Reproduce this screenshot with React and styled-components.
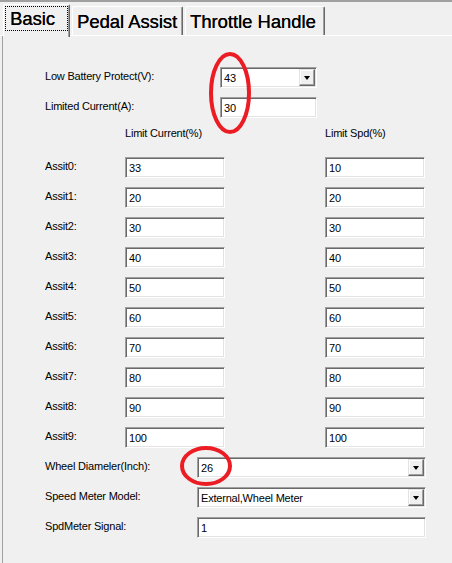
import React from 'react'
import styled, { createGlobalStyle } from 'styled-components'

const GlobalStyle = createGlobalStyle`
  html, body {
    margin: 0;
    padding: 0;
    background: #f0f0f0;
  }
  body {
    font-family: "Liberation Sans", Arial, sans-serif;
  }
`

const Window = styled.div`
  position: relative;
  width: 452px;
  height: 563px;
  overflow: hidden;
  box-sizing: border-box;
  border-top: 2px solid #a0a0a0;
  background: #f0f0f0;
  display: flex;
  flex-direction: column;
`

const TabStrip = styled.div`
  display: flex;
  align-items: flex-end;
  height: 33px;
  padding-left: 3px;
  border-bottom: 1px solid #fff;
`

const Tab = styled.div`
  position: relative;
  box-sizing: border-box;
  width: ${p => p.w}px;
  height: ${p => (p.active ? '33px' : '29px')};
  margin-bottom: ${p => (p.active ? '-2px' : '0')};
  margin-right: 2px;
  padding: ${p => (p.active ? '0 0 0 1px' : '0 0 0 4px')};
  background: #f0f0f0;
  border-top: 1px solid #fff;
  border-left: 1px solid #fff;
  border-right: 1px solid #696969;
  box-shadow: inset -1px 0 #a0a0a0;
  border-radius: 2px 2px 0 0;
  font-size: 18.4px;
  line-height: 27px;
  color: #000;
  text-shadow: 0.15px 0 0 #000;
  white-space: nowrap;
  display: flex;
  align-items: ${p => (p.active ? 'flex-start' : 'center')};
`

const FocusRing = styled.span`
  display: block;
  box-sizing: border-box;
  width: 63px;
  margin-top: 1px;
  padding: 0 5px;
  height: 25px;
  line-height: 25px;
  outline: 1px dotted #000;
  outline-offset: -1px;
`

const Panel = styled.div`
  flex: 1;
  margin-left: 2px;
  border-left: 1px solid #a0a0a0;
  padding: 31px 0 0 42px;
  display: flex;
  flex-direction: column;
  gap: 9px;
`

const Row = styled.div`
  display: flex;
  align-items: center;
  height: 21px;
`

const Label = styled.div`
  width: ${p => p.w}px;
  flex: none;
  font-size: 11px;
  letter-spacing: -0.2px;
  color: #000;
  padding-bottom: 3px;
  white-space: nowrap;
`

const HeaderRow = styled.div`
  display: flex;
  height: 13px;
  margin-bottom: 8px;
  padding-left: 80px;
  font-size: 11px;
  letter-spacing: -0.2px;
  line-height: 13px;
`

const HeaderCell = styled.div`
  flex: none;
  width: ${p => p.w}px;
  white-space: nowrap;
`

const Field = styled.div`
  box-sizing: border-box;
  width: ${p => p.w}px;
  height: 21px;
  margin-right: ${p => p.gap || 0}px;
  flex: none;
  background: #fff;
  border: 1px solid;
  border-color: #a0a0a0 #fff #fff #a0a0a0;
  box-shadow: inset 1px 1px #696969, inset -1px -1px #e3e3e3;
  display: flex;
  align-items: center;
  padding: 0 2px 0 3px;
  font-size: 11px;
  letter-spacing: -0.2px;
  color: #000;
`

const FieldText = styled.span`
  flex: 1;
  white-space: nowrap;
  overflow: hidden;
`

const DropButton = styled.div`
  box-sizing: border-box;
  width: 16px;
  height: 17px;
  margin-right: -1px;
  background: #f0f0f0;
  border: 1px solid;
  border-color: #e3e3e3 #696969 #696969 #e3e3e3;
  box-shadow: inset -1px -1px #a0a0a0, inset 1px 1px #fff;
  display: flex;
  align-items: center;
  justify-content: center;
`

const Arrow = styled.span`
  width: 0;
  height: 0;
  margin-top: 1px;
  border-left: 3.5px solid transparent;
  border-right: 3.5px solid transparent;
  border-top: 4px solid #000;
`

const Marks = styled.svg`
  position: absolute;
  left: 0;
  top: 0;
  pointer-events: none;
`

const Combo = ({ w, value }) => (
  <Field w={w}>
    <FieldText>{value}</FieldText>
    <DropButton>
      <Arrow />
    </DropButton>
  </Field>
)

const assists = [
  ['33', '10'],
  ['20', '20'],
  ['30', '30'],
  ['40', '40'],
  ['50', '50'],
  ['60', '60'],
  ['70', '70'],
  ['80', '80'],
  ['90', '90'],
  ['100', '100'],
]

export default function App() {
  return (
    <>
      <GlobalStyle />
      <Window>
        <TabStrip>
          <Tab active w={67}>
            <FocusRing>Basic</FocusRing>
          </Tab>
          <Tab w={111}>Pedal Assist</Tab>
          <Tab w={140}>Throttle Handle</Tab>
        </TabStrip>
        <Panel>
          <Row>
            <Label w={175}>Low Battery Protect(V):</Label>
            <Combo w={97} value="43" />
          </Row>
          <Row>
            <Label w={175}>Limited Current(A):</Label>
            <Field w={97}>30</Field>
          </Row>
          <HeaderRow>
            <HeaderCell w={200}>Limit Current(%)</HeaderCell>
            <HeaderCell w={100}>Limit Spd(%)</HeaderCell>
          </HeaderRow>
          {assists.map(([cur, spd], i) => (
            <Row key={i}>
              <Label w={80}>Assit{i}:</Label>
              <Field w={100} gap={100}>{cur}</Field>
              <Field w={100}>{spd}</Field>
            </Row>
          ))}
          <Row>
            <Label w={152}>Wheel Diameler(Inch):</Label>
            <Combo w={229} value="26" />
          </Row>
          <Row>
            <Label w={152}>Speed Meter Model:</Label>
            <Combo w={229} value="External,Wheel Meter" />
          </Row>
          <Row>
            <Label w={152}>SpdMeter Signal:</Label>
            <Field w={229}>1</Field>
          </Row>
        </Panel>
        {/* red hand-drawn annotation circles */}
        <Marks width="452" height="563" viewBox="0 0 452 563">
          <ellipse cx="230" cy="91" rx="19" ry="39" fill="none" stroke="#ec1c24" strokeWidth="4" />
          <ellipse cx="206" cy="464" rx="24" ry="18" fill="none" stroke="#ec1c24" strokeWidth="4" />
        </Marks>
      </Window>
    </>
  )
}
